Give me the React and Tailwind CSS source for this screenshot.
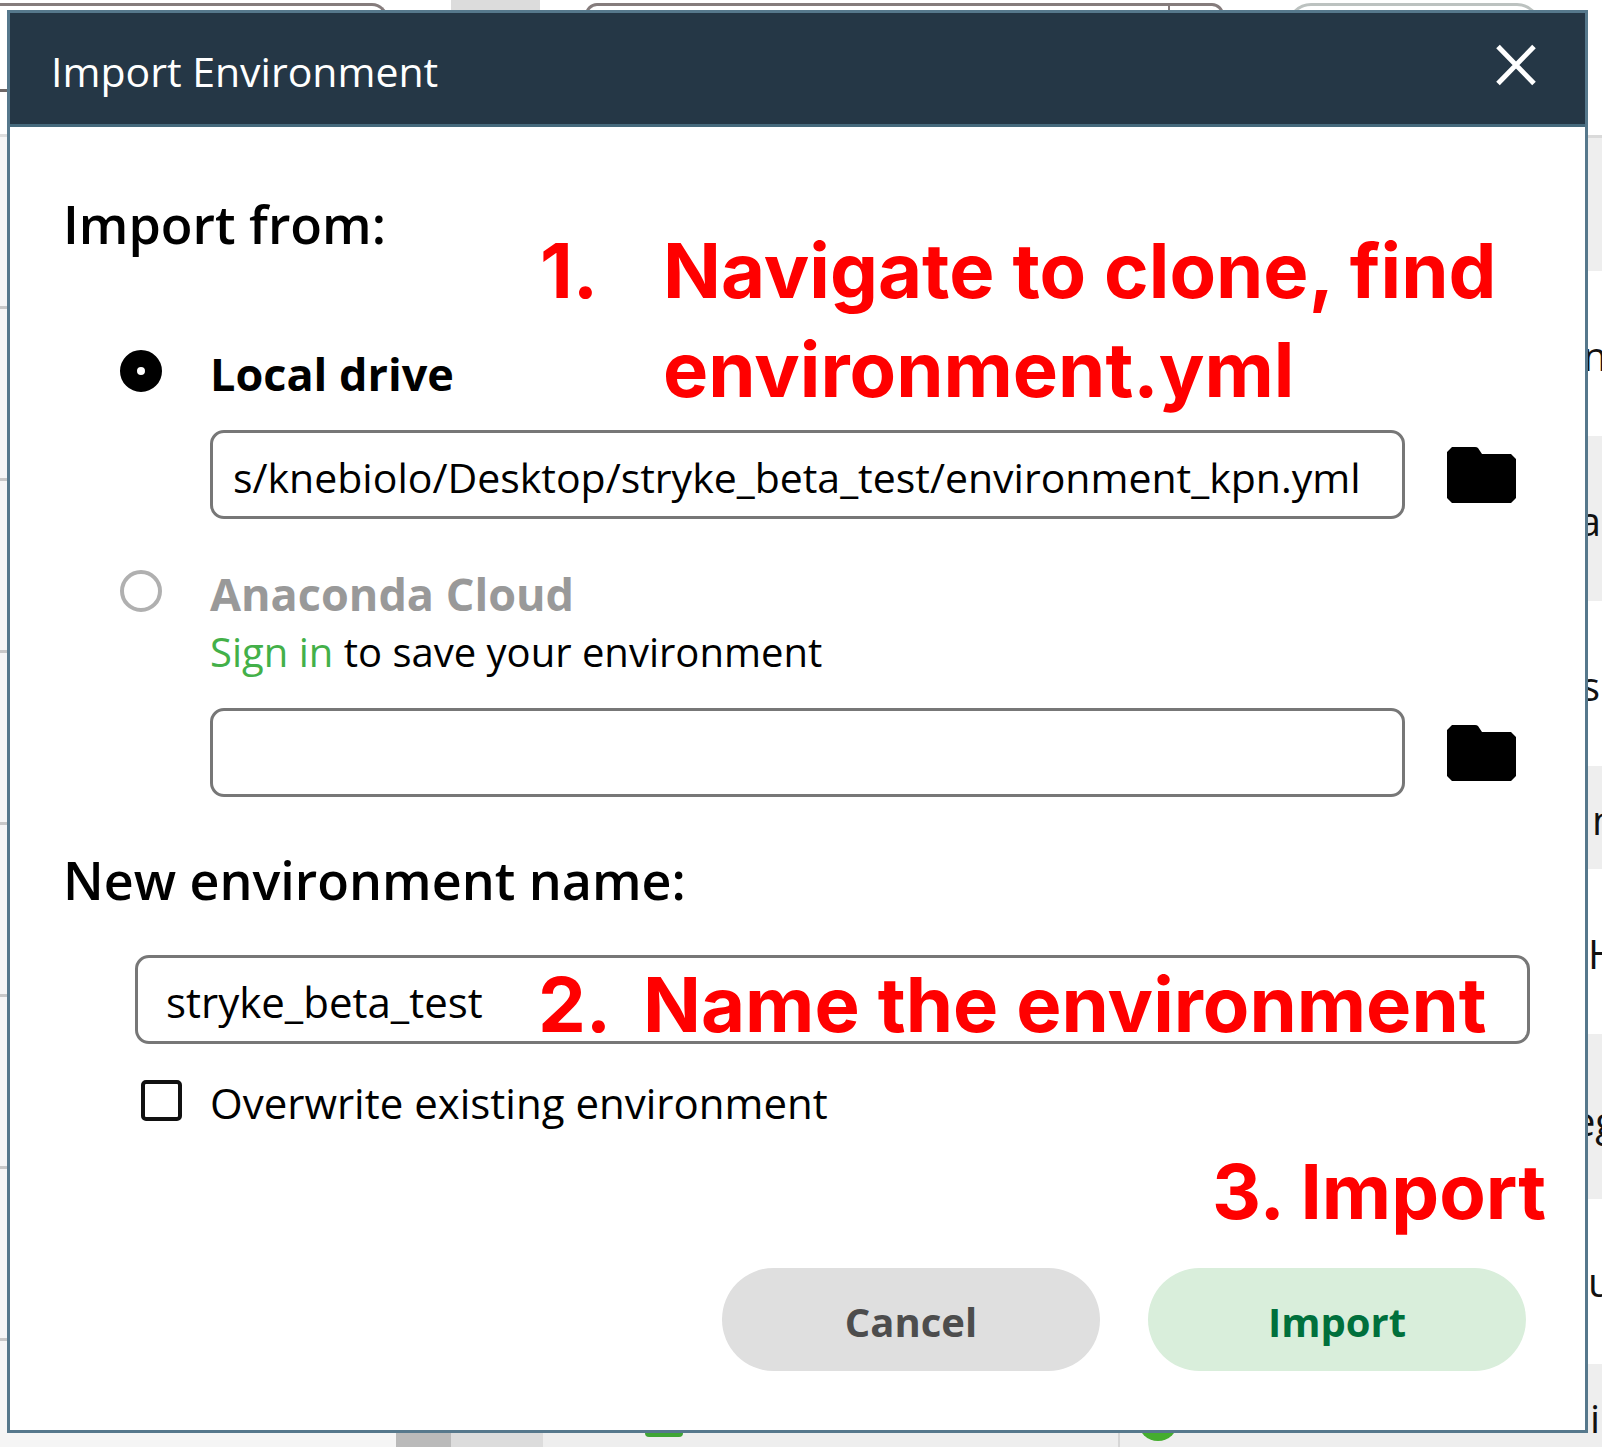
import { useState } from "react";

const leftRows = [1, 2, 3, 4, 5, 6, 7, 8];

function FolderIcon() {
  return (
    <svg viewBox="0 0 69 56" className="block h-[56px] w-[69px]" aria-hidden="true">
      <path
        d="M5 0H28Q30 0 31 1L35 7H64L69 12V51L64 56H5L0 51V5Z"
        fill="#000"
        stroke="none"
      />
    </svg>
  );
}

function BackdropTop() {
  return (
    <div className="flex h-[10px] shrink-0 overflow-hidden bg-white">
      <div className="mt-[3px] h-10 w-[388px] shrink-0 rounded-tr-2xl border-t-[3px] border-r-[3px] border-[#857c7c]" />
      <div className="ml-[63px] w-[89px] shrink-0 bg-[#dcdcdc]" />
      <div className="mt-[3px] ml-[45px] flex h-10 w-[639px] shrink-0 justify-end rounded-t-xl border-[3px] border-[#857c7c]">
        <div className="w-[53px] border-l-2 border-[#857c7c]" />
      </div>
      <div className="mt-[3px] ml-[63px] h-16 w-[254px] shrink-0 rounded-[24px] border-[3px] border-[#bcc2c0]" />
    </div>
  );
}

function BackdropLeft() {
  return (
    <div className="flex w-[7px] shrink-0 flex-col">
      <div className="h-[82px] shrink-0 border-b-[3px] border-[#6d6868] bg-white" />
      <div className="h-[45px] shrink-0 border-b-[3px] border-[#dddddd] bg-white" />
      {leftRows.map((n) => (
        <div
          key={n}
          className="h-[172px] min-h-0 border-b-[3px] border-[#c8c8c8] bg-[#f6f6f6] last:flex-1 last:border-b-0"
        />
      ))}
    </div>
  );
}

function BackdropRight() {
  return (
    <div className="flex w-[14px] shrink-0 flex-col overflow-hidden text-[40px] leading-[48px] text-[#111] *:flex *:shrink-0 *:items-center *:overflow-hidden">
      <div className="h-[125px] bg-white" />
      <div className="h-[136px] border-t-[3px] border-[#dadada] bg-[#eeeeee]" />
      <div className="h-[165px] justify-center bg-white pt-1">n</div>
      <div className="h-[165px] justify-end bg-[#eeeeee] pt-1 pr-px">a</div>
      <div className="h-[165px] justify-end bg-white pt-1 pr-[2px]">s</div>
      <div className="h-[103px] bg-[#eeeeee] pt-1 pl-1">n</div>
      <div className="h-[165px] bg-white pt-1">H</div>
      <div className="h-[165px] justify-center bg-[#eeeeee] pt-2">eg</div>
      <div className="h-[165px] bg-white">u</div>
      <div className="h-[69px] justify-center bg-[#eeeeee] pt-10">i</div>
    </div>
  );
}

function BackdropBottom() {
  return (
    <div className="flex h-[14px] shrink-0 overflow-hidden bg-[#eeeeee]">
      <div className="w-[396px] shrink-0 bg-[#f5f5f5]" />
      <div className="w-[55px] shrink-0 bg-[#bababa]" />
      <div className="w-[92px] shrink-0 bg-[#dcdcdc]" />
      <div className="ml-[102px] h-1 w-[38px] shrink-0 rounded-b-sm bg-[#3fa535]" />
      <div className="ml-[435px] w-[2px] shrink-0 bg-[#d6d6d6]" />
      <div className="-mt-8 ml-[18px] size-10 shrink-0 rounded-full bg-[#45ad2f]" />
    </div>
  );
}

const field =
  "h-[89px] w-full min-w-0 rounded-[14px] border-[3px] border-[#777777] bg-white text-black outline-none";
const radio =
  "size-[42px] shrink-0 appearance-none rounded-full border-[#b0b0b0] border-[4px] bg-white checked:border-[17px] checked:border-black";
const note =
  "pointer-events-none absolute font-['Inter',sans-serif] text-[76px] leading-[99px] font-bold whitespace-nowrap text-[#ff0000]";

export default function App() {
  const [source, setSource] = useState("local");
  const [path, setPath] = useState("s/knebiolo/Desktop/stryke_beta_test/environment_kpn.yml");
  const [cloud, setCloud] = useState("");
  const [name, setName] = useState("stryke_beta_test");
  const [overwrite, setOverwrite] = useState(false);

  return (
    <div className="flex min-h-screen flex-col overflow-hidden bg-white font-['Open_Sans','Noto_Sans',sans-serif] text-black">
      <BackdropTop />
      <div className="flex flex-1">
        <BackdropLeft />
        <div role="dialog" aria-labelledby="title" className="min-w-0 flex-1 border-[3px] border-[#56788c] bg-white">
          <header className="flex h-[114px] items-center justify-between border-b-[3px] border-[#45697c] bg-[#253746] pr-[49px] pl-[41px]">
            <h1 id="title" className="pt-1 text-[41px] leading-[48px] text-white">Import Environment</h1>
            <button type="button" aria-label="Close" className="pb-2">
              <svg viewBox="0 0 40 42" className="block h-[42px] w-[40px]" fill="none" stroke="#fff" strokeWidth="5" aria-hidden="true">
                <path d="M2 2.5L38 39.5M38 2.5L2 39.5" />
              </svg>
            </button>
          </header>

          <form className="pt-[70px] pr-[55px] pb-[57px] pl-[53px]" onSubmit={(e) => e.preventDefault()}>
            <section className="relative">
              <h2 className="text-[52px] leading-[54px] font-semibold">Import from:</h2>
              <div className="mt-[99px] pr-[14px] pl-[57px]">
                <div className="flex items-start gap-12">
                  <input id="local" type="radio" name="source" checked={source === "local"} onChange={() => setSource("local")} className={radio} />
                  <label htmlFor="local" className="text-[45px] leading-[48px] font-bold">Local drive</label>
                </div>
                <div className="mt-8 flex items-center gap-[42px] pl-[90px]">
                  <input type="text" aria-label="Local file" value={path} onChange={(e) => setPath(e.target.value)} className={field + " pt-1 pl-5 text-[41px]"} />
                  <button type="button" aria-label="Browse local files" className="shrink-0"><FolderIcon /></button>
                </div>

                <div className="mt-[51px] flex items-start gap-12">
                  <input id="cloud" type="radio" name="source" checked={source === "cloud"} onChange={() => setSource("cloud")} className={radio} />
                  <label htmlFor="cloud" className="text-[45px] leading-[48px] font-bold text-[#999999]">Anaconda Cloud</label>
                </div>
                <p className="mt-[10px] pl-[90px] text-[40px] leading-[48px]">
                  <a href="#sign-in" className="text-[#43b049]">Sign in</a> to save your environment
                </p>
                <div className="mt-8 flex items-center gap-[42px] pl-[90px]">
                  <input type="text" aria-label="Cloud environment" value={cloud} onChange={(e) => setCloud(e.target.value)} className={field + " pt-1 pl-5 text-[41px]"} />
                  <button type="button" aria-label="Browse cloud environments" className="shrink-0"><FolderIcon /></button>
                </div>
              </div>
              <div className={note + " top-6 left-[477px] grid grid-cols-[123px_auto]"}>
                <span>1.</span>
                <span>Navigate to clone, find<br />environment.yml</span>
              </div>
            </section>

            <section className="mt-14">
              <label htmlFor="name" className="block text-[52px] leading-[54px] font-semibold">New environment name:</label>
              <div className="relative mt-12 ml-[72px]">
                <input id="name" type="text" value={name} onChange={(e) => setName(e.target.value)} className={field + " block pt-1 pl-7 text-[42px]"} />
                <div className={note + " top-0 left-[403px] grid grid-cols-[105px_auto]"}>
                  <span>2.</span>
                  <span>Name the environment</span>
                </div>
              </div>
              <div className="mt-9 flex items-start gap-7 pl-[78px]">
                <input id="overwrite" type="checkbox" checked={overwrite} onChange={(e) => setOverwrite(e.target.checked)} className="size-[41px] shrink-0 appearance-none rounded-[5px] border-4 border-[#111111] bg-white checked:bg-[#111111]" />
                <label htmlFor="overwrite" className="text-[42px] leading-[46px]">Overwrite existing environment</label>
              </div>
            </section>

            <footer className="relative mt-[142px] flex justify-end gap-12 pr-1">
              <button type="button" className="h-[103px] w-[378px] rounded-full bg-[#dfdfdf] pt-1 text-[40px] leading-[48px] font-bold text-[#4d4d4d]">Cancel</button>
              <button type="submit" className="h-[103px] w-[378px] rounded-full bg-[#d9eedb] pt-1 text-[40px] leading-[48px] font-bold text-[#00703c]">Import</button>
              <div className={note + " -right-4 bottom-full mb-[27px]"}>3. Import</div>
            </footer>
          </form>
        </div>
        <BackdropRight />
      </div>
      <BackdropBottom />
    </div>
  );
}
